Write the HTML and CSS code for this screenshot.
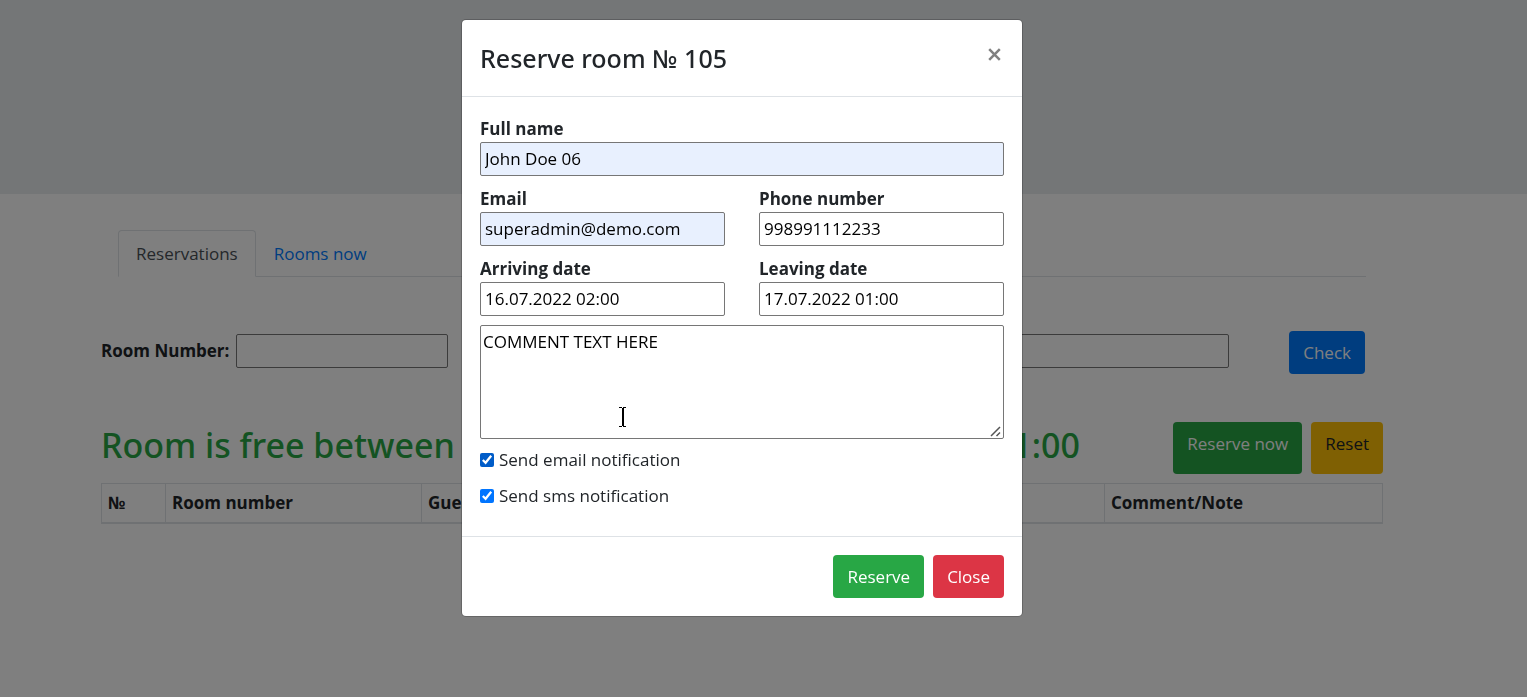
FILE: index.html
```html
<!DOCTYPE html>
<html lang="en">
<head>
<meta charset="utf-8">
<meta name="viewport" content="width=device-width, initial-scale=1">
<title>Reservations</title>
<link rel="stylesheet" href="styles.css">
</head>
<body>
<header class="jumbotron"></header>
<main class="page">
  <div class="container">
    <nav class="tabs">
      <a class="tab tab-active" href="#reservations">Reservations</a>
      <a class="tab" href="#rooms">Rooms now</a>
    </nav>
    <form class="search">
      <div class="search-fields">
        <label class="search-field"><span>Room Number:</span><input class="input" type="text"></label>
        <label class="search-field"><input class="input" type="text" aria-label="From"></label>
        <label class="search-field"><input class="input" type="text" aria-label="To"></label>
      </div>
      <button class="btn btn-primary" type="button">Check</button>
    </form>
    <div class="result">
      <h1 class="result-title"><span>Room is free between</span> <span>01:00</span></h1>
      <div class="result-actions">
        <a class="btn btn-success" href="#reserve">Reserve now</a>
        <a class="btn btn-warning" href="#reset">Reset</a>
      </div>
    </div>
    <table class="table">
      <thead>
        <tr><th class="col-index">№</th><th class="col-room">Room number</th><th class="col-guest">Guest</th><th class="col-dates"></th><th>Comment/Note</th></tr>
      </thead>
    </table>
  </div>
</main>

<div class="backdrop">
  <section class="modal" role="dialog" aria-modal="true" aria-labelledby="modal-title">
    <div class="modal-header">
      <h2 class="modal-title" id="modal-title">Reserve room № 105</h2>
      <button class="modal-close" type="button" aria-label="Close dialog">
        <svg width="13" height="13" viewBox="0 0 13 13"><path d="M1.2 1.2 11.8 11.8M11.8 1.2 1.2 11.8" stroke="#808080" stroke-width="2.5" fill="none"/></svg>
      </button>
    </div>
    <form class="modal-body">
      <div class="field">
        <label for="name">Full name</label>
        <input class="input input-filled" id="name" type="text" value="John Doe 06">
      </div>
      <div class="field-row">
        <div class="field">
          <label for="email">Email</label>
          <input class="input input-filled" id="email" type="email" value="superadmin@demo.com">
        </div>
        <div class="field">
          <label for="phone">Phone number</label>
          <input class="input" id="phone" type="tel" value="998991112233">
        </div>
      </div>
      <div class="field-row">
        <div class="field">
          <label for="arriving">Arriving date</label>
          <input class="input" id="arriving" type="text" value="16.07.2022 02:00">
        </div>
        <div class="field">
          <label for="leaving">Leaving date</label>
          <input class="input" id="leaving" type="text" value="17.07.2022 01:00">
        </div>
      </div>
      <div class="comment">
        <textarea class="input textarea" aria-label="Comment">COMMENT TEXT HERE</textarea>
        <svg class="grip" width="11" height="11" viewBox="0 0 11 11"><path d="M1 10 10 1M6.500 10 10 6.500" stroke="#555" stroke-width="1.500" fill="none"/></svg>
        <svg class="cursor" width="9" height="20" viewBox="0 0 9 20" shape-rendering="crispEdges"><path d="M1 0h3v1h1V0h3v1H6v18h2v1H5v-1H4v1H1v-1h3V1H1z" fill="#000"/></svg>
      </div>
      <div class="checks">
        <label class="check"><input class="check-box check-hover" type="checkbox" checked>Send email notification</label>
        <label class="check"><input class="check-box" type="checkbox" checked>Send sms notification</label>
      </div>
    </form>
    <div class="modal-footer">
      <button class="btn btn-success" type="button">Reserve</button>
      <button class="btn btn-danger" type="button">Close</button>
    </div>
  </section>
</div>
</body>
</html>
```
FILE: styles.css
```css
* { box-sizing: border-box; }
body {
  margin: 0;
  background: #fff;
  color: #212529;
  font-family: "Open Sans", "Noto Sans", sans-serif;
  font-size: 17px;
  line-height: 27px;
}
a { text-decoration: none; }
label, th { font-weight: 700; }
.jumbotron { height: 194px; background: #e9ecef; }
.page { padding: 36px 43px 0 0; }
.container { max-width: 1282px; margin: 0 auto; }
.input {
  width: 100%;
  height: 34px;
  padding: 0 4px 1px;
  border: 1px solid #767676;
  border-radius: 2px;
  background: #fff;
  color: #000;
  font: inherit;
  font-weight: 400;
}
.input-filled { background: #e8f0fe; }
.btn {
  padding: 7px 13px;
  border: 1px solid transparent;
  border-radius: 4px;
  color: #fff;
  font: inherit;
}
.btn-primary { background: #007bff; }
.btn-success { background: #28a745; }
.btn-danger { background: #dc3545; }
.btn-warning { background: #ffc107; color: #212529; }

.tabs {
  display: flex;
  margin: 0 17px;
  border-bottom: 1px solid #dee2e6;
}
.tab {
  margin-bottom: -1px;
  padding: 9px 17px;
  border: 1px solid transparent;
  border-radius: 4px 4px 0 0;
  color: #007bff;
}
.tab-active {
  border-color: #dee2e6 #dee2e6 #fff;
  background: #fff;
  color: #495057;
}
.search {
  display: flex;
  justify-content: space-between;
  align-items: center;
  margin: 54px 18px 0 0;
}
.search-fields {
  display: flex;
  flex: 0 1 1128px;
  justify-content: space-between;
  padding-bottom: 4px;
}
.search-field { display: flex; align-items: center; gap: 7px; }
.search-field .input { width: 212px; }
.result {
  display: flex;
  justify-content: space-between;
  margin: 48px 0 9px;
}
.result-title, .modal-title {
  margin: 0;
  font-family: "Noto Sans", "Open Sans", sans-serif;
  font-weight: 500;
}
.result-title {
  display: flex;
  flex: 0 1 979px;
  justify-content: space-between;
  color: #28a745;
  font-size: 34px;
  line-height: 46px;
  white-space: nowrap;
}
.result-actions { display: flex; gap: 9px; height: 52px; }
.table { width: 100%; border-collapse: collapse; table-layout: fixed; }
.table th {
  padding: 5px 6px 6px;
  border: 1px solid #dee2e6;
  border-bottom-width: 2px;
  text-align: left;
}
.col-index { width: 64px; }
.col-room { width: 256px; }
.col-guest { width: 342px; }
.col-dates { width: 341px; }

.backdrop {
  position: fixed;
  inset: 0;
  padding: 20px 43px 20px 0;
  background: rgba(0, 0, 0, .5);
}
.modal {
  max-width: 560px;
  margin: 0 auto;
  border-radius: 4px;
  background: #fff;
  box-shadow: 0 0 0 1px rgba(0, 0, 0, .2);
}
.modal-header {
  display: flex;
  justify-content: space-between;
  align-items: flex-start;
  padding: 18px;
  border-bottom: 1px solid #dee2e6;
}
.modal-title {
  font-size: 25px;
  line-height: 40px;
}
.modal-close {
  display: flex;
  padding: 10px 3px;
  border: 0;
  background: none;
}
.modal-body {
  display: flex;
  flex-direction: column;
  gap: 9px;
  padding: 18px 18px 27px;
}
.field { display: flex; flex-direction: column; }
.field-row { display: grid; grid-template-columns: 1fr 1fr; gap: 34px; }
.comment { position: relative; display: flex; }
.textarea { height: 114px; padding: 2px; resize: none; }
.grip { position: absolute; right: 3px; bottom: 2px; }
.cursor { position: absolute; left: 138px; top: 82px; }
.checks {
  display: flex;
  flex-direction: column;
  gap: 9px;
  margin-top: -2px;
}
.check { display: flex; align-items: center; gap: 5px; font-weight: 400; }
.check-box { width: 14px; height: 14px; margin: 0; accent-color: #0075ff; }
.check-hover { accent-color: #005cc8; }
.modal-footer {
  display: flex;
  justify-content: flex-end;
  gap: 9px;
  padding: 18px;
  border-top: 1px solid #dee2e6;
}
```
